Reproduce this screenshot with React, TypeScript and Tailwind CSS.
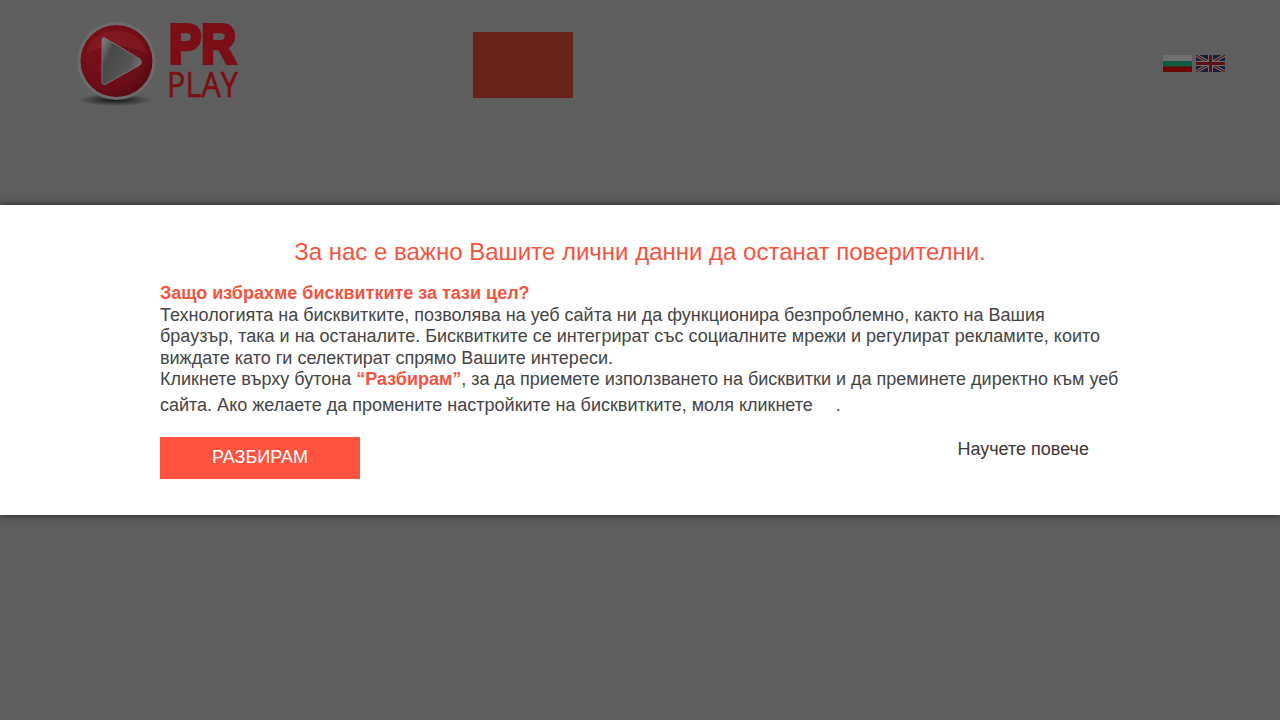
const font = { fontFamily: '"Liberation Sans", Arial, sans-serif' };

function Logo() {
  return (
    <svg width="180" height="96" viewBox="0 0 180 96" className="block">
      <defs>
        <radialGradient id="disc" cx="0.35" cy="0.3" r="0.8">
          <stop offset="0" stopColor="#7c1019" />
          <stop offset="0.7" stopColor="#6c0e17" />
          <stop offset="1" stopColor="#520a10" />
        </radialGradient>
        <linearGradient id="play" x1="0" y1="0" x2="1" y2="0.6">
          <stop offset="0" stopColor="#868686" />
          <stop offset="0.3" stopColor="#484848" />
          <stop offset="0.75" stopColor="#565656" />
          <stop offset="1" stopColor="#707070" />
        </linearGradient>
        <radialGradient id="floor">
          <stop offset="0" stopColor="#141414" />
          <stop offset="1" stopColor="#141414" stopOpacity="0" />
        </radialGradient>
      </defs>
      <ellipse cx="43" cy="85" rx="38" ry="6" fill="url(#floor)" />
      <circle cx="44.5" cy="46" r="39" fill="#6c6c6c" />
      <circle cx="44.5" cy="46" r="36" fill="url(#disc)" />
      <path d="M14 39 A31 29 0 0 1 75 39 Q44 23 14 39Z" fill="#8e252b" opacity="0.4" />
      <path d="M33 23 Q30 21 30 26 L30 66 Q30 71 34 69 L68 50 Q71 47 68 44Z" fill="url(#play)" stroke="#737373" strokeWidth="1" />
      <text x="97" y="48" fontFamily="Liberation Sans" fontWeight="700" fontSize="55" fill="#7c0f15" stroke="#7c0f15" strokeWidth="4" textLength="67" lengthAdjust="spacingAndGlyphs">PR</text>
      <text x="95" y="82" fontFamily="Open Sans" fontSize="34" fill="#7c0f15" stroke="#7c0f15" strokeWidth="0.6" textLength="71" lengthAdjust="spacingAndGlyphs">PLAY</text>
    </svg>
  );
}

function FlagBg() {
  return (
    <svg width="29" height="17" viewBox="0 0 29 17" className="block">
      <rect width="29" height="6" fill="#6f6f6f" />
      <rect y="6" width="29" height="6" fill="#0f5c45" />
      <rect y="11.5" width="29" height="5.5" fill="#6d0606" />
    </svg>
  );
}

function FlagEn() {
  return (
    <svg width="29" height="17" viewBox="0 0 29 17" className="block">
      <rect width="29" height="17" fill="#171d3a" />
      <path d="M0 0L29 17M29 0L0 17" stroke="#6e6e6e" strokeWidth="3.4" />
      <path d="M0 0L29 17M29 0L0 17" stroke="#5c1018" strokeWidth="1.1" />
      <path d="M14.5 0V17M0 8.5H29" stroke="#6e6e6e" strokeWidth="5" />
      <path d="M14.5 0V17M0 8.5H29" stroke="#5c1018" strokeWidth="3" />
    </svg>
  );
}

export default function App() {
  return (
    <div className="h-[720px] w-full overflow-hidden bg-[#5f5f5f]" style={font}>
      <header className="flex h-[205px] items-start">
        <div className="ml-[72px] mt-[15px] w-[180px]">
          <Logo />
        </div>
        <div className="ml-[221px] mt-[32px] h-[66px] w-[100px] bg-[#67231b]" />
        <div className="ml-auto mr-[55px] mt-[55px] flex gap-[4px]">
          <FlagBg />
          <FlagEn />
        </div>
      </header>

      <section className="relative h-[310px] bg-white px-[160px] pt-[33px] shadow-[0_0_8px_rgba(0,0,0,0.65)]">
        <h1 className="text-center text-[24px] leading-[28px] font-normal text-[#f5533f]">
          За нас е важно Вашите лични данни да останат поверителни.
        </h1>
        <div className="mt-[17px] text-[18px] leading-[21.6px] text-[#444444]">
          <p className="font-bold text-[#f5533f]">Защо избрахме бисквитките за тази цел?</p>
          <p>
            Технологията на бисквитките, позволява на уеб сайта ни да функционира безпроблемно, както на Вашия браузър, така и на останалите. Бисквитките се интегрират със социалните мрежи и регулират рекламите, които виждате като ги селектират спрямо Вашите интереси.
          </p>
          <p>
            Кликнете върху бутона <b className="text-[#f5533f]">“Разбирам”</b>, за да приемете използването на бисквитки и да преминете директно към уеб сайта. Ако желаете да промените настройките на бисквитките, моля кликнете{" "}
            <span className="inline-block h-[31px] w-[18px] align-middle" />.
          </p>
        </div>
        <div className="mt-[15px] flex items-start justify-between">
          <button className="h-[42px] w-[200px] bg-[#ff5340] text-[18px] text-white">РАЗБИРАМ</button>
          <a className="mr-[31px] text-[18px] leading-[24px] text-[#3d3533]">Научете повече</a>
        </div>
      </section>
    </div>
  );
}
